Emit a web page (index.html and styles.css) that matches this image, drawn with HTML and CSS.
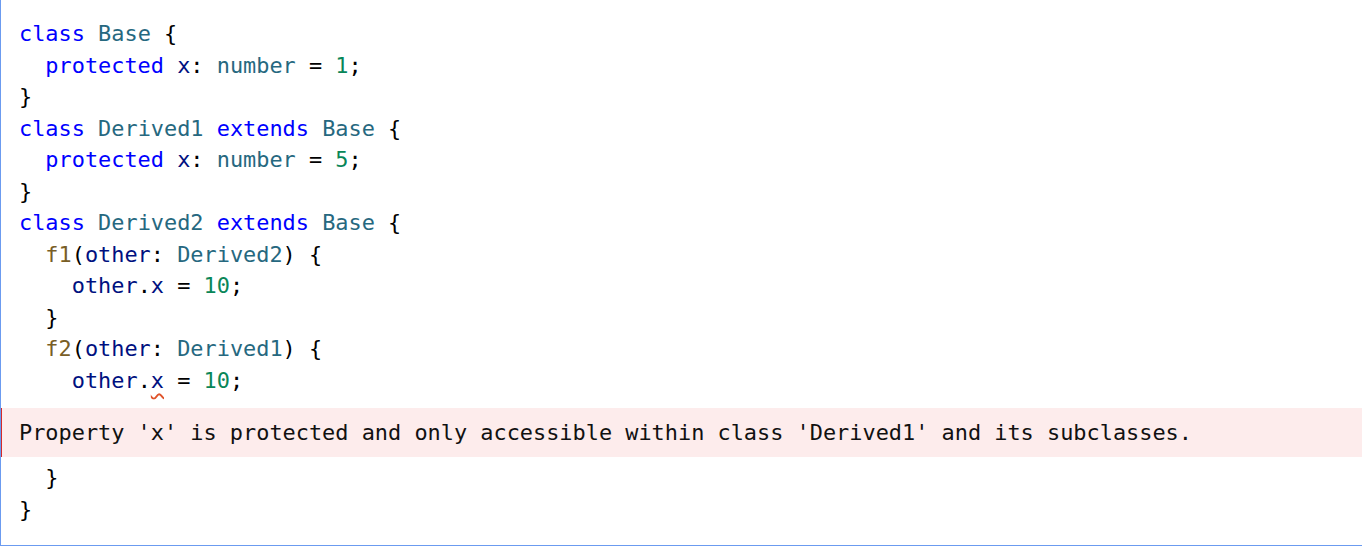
FILE: index.html
```html
<!DOCTYPE html>
<html>
<head>
<meta charset="utf-8">
<link rel="stylesheet" href="styles.css">
</head>
<body>
<div class="editor">
  <div class="code">
    <div class="line"><span class="kw">class</span> <span class="ty">Base</span> {</div>
    <div class="line">  <span class="kw">protected</span> <span class="va">x</span>: <span class="ty">number</span> = <span class="nu">1</span>;</div>
    <div class="line">}</div>
    <div class="line"><span class="kw">class</span> <span class="ty">Derived1</span> <span class="kw">extends</span> <span class="ty">Base</span> {</div>
    <div class="line">  <span class="kw">protected</span> <span class="va">x</span>: <span class="ty">number</span> = <span class="nu">5</span>;</div>
    <div class="line">}</div>
    <div class="line"><span class="kw">class</span> <span class="ty">Derived2</span> <span class="kw">extends</span> <span class="ty">Base</span> {</div>
    <div class="line">  <span class="fn">f1</span>(<span class="va">other</span>: <span class="ty">Derived2</span>) {</div>
    <div class="line">    <span class="va">other</span>.<span class="va">x</span> = <span class="nu">10</span>;</div>
    <div class="line">  }</div>
    <div class="line">  <span class="fn">f2</span>(<span class="va">other</span>: <span class="ty">Derived1</span>) {</div>
    <div class="line">    <span class="va">other</span>.<span class="va err-mark">x</span> = <span class="nu">10</span>;</div>
  </div>
  <div class="error">Property 'x' is protected and only accessible within class 'Derived1' and its subclasses.</div>
  <div class="code code-after">
    <div class="line">  }</div>
    <div class="line">}</div>
  </div>
</div>
</body>
</html>
```

FILE: styles.css
```css
html, body {
  margin: 0;
  padding: 0;
  background: #ffffff;
}

.editor {
  box-sizing: border-box;
  width: 1362px;
  height: 546px;
  border-left: 1px solid #6b9bf0;
  border-bottom: 1px solid #6b9bf0;
  padding-top: 18px;
  font-family: "DejaVu Sans Mono", "Liberation Mono", monospace;
  font-size: 21.9px;
  color: #000000;
  overflow: hidden;
}

.code {
  padding-left: 18px;
}

.line {
  white-space: pre;
  height: 31.5px;
  line-height: 31.5px;
}

.kw { color: #0000ff; }
.ty { color: #26687f; }
.va { color: #001080; }
.nu { color: #098658; }
.fn { color: #795e26; }

.err-mark {
  text-decoration: underline wavy #e0532a;
  text-decoration-thickness: 1.5px;
  text-underline-offset: 5px;
}

.error {
  margin-top: 11.75px;
  margin-left: -1px;
  border-left: 2px solid #d42a2a;
  background: #fdecec;
  height: 49px;
  line-height: 49px;
  padding-left: 17px;
  white-space: pre;
  color: #111111;
}

.code-after {
  margin-top: 5.25px;
}
```
